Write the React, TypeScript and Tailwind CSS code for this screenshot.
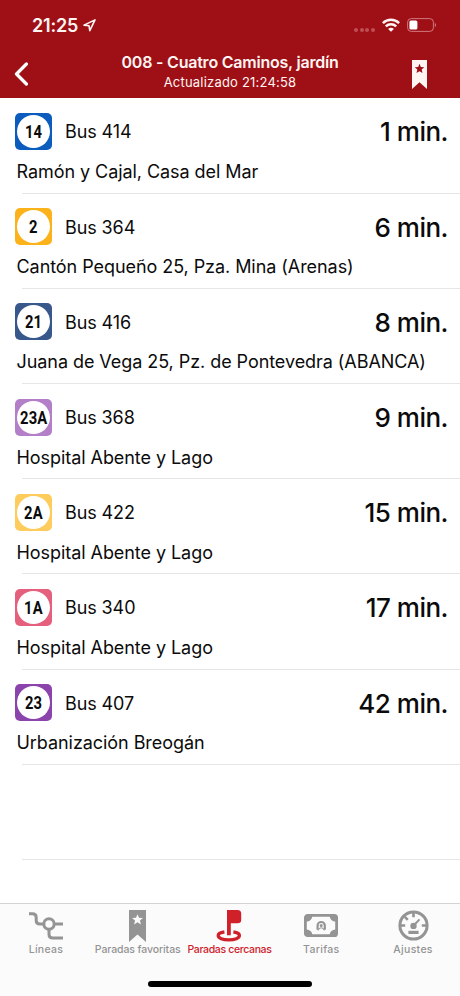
// Bus stop arrivals screen
import React from 'react'

interface Arrival {
  line: string
  bus: string
  destination: string
  minutes: number
  color: string
}

const arrivals: Arrival[] = [
  { line: '14', bus: '414', destination: 'Ramón y Cajal, Casa del Mar', minutes: 1, color: 'bg-[#0b5cbc]' },
  { line: '2', bus: '364', destination: 'Cantón Pequeño 25, Pza. Mina (Arenas)', minutes: 6, color: 'bg-[#fcb31b]' },
  { line: '21', bus: '416', destination: 'Juana de Vega 25, Pz. de Pontevedra (ABANCA)', minutes: 8, color: 'bg-[#38588c]' },
  { line: '23A', bus: '368', destination: 'Hospital Abente y Lago', minutes: 9, color: 'bg-[#b27fc8]' },
  { line: '2A', bus: '422', destination: 'Hospital Abente y Lago', minutes: 15, color: 'bg-[#fdcc5c]' },
  { line: '1A', bus: '340', destination: 'Hospital Abente y Lago', minutes: 17, color: 'bg-[#e5607c]' },
  { line: '23', bus: '407', destination: 'Urbanización Breogán', minutes: 42, color: 'bg-[#8a44ab]' },
]

function LocationArrow() {
  return (
    <svg width="13" height="13" viewBox="0 0 13 13" fill="none" stroke="currentColor" strokeWidth="1.6" strokeLinejoin="round">
      <path d="M12 .9 1 6.1l5 .6.8 5z" />
    </svg>
  )
}

function WifiIcon() {
  return (
    <svg width="18" height="14" viewBox="0 0 18 14" fill="none" stroke="currentColor" strokeWidth="2.5">
      <path d="M.9 5.1a11.6 11.6 0 0 1 16.2 0" />
      <path d="M3.8 8.4a7.5 7.5 0 0 1 10.4 0" />
      <path d="M9 13.7 6.1 10.9a4 4 0 0 1 5.8 0z" fill="currentColor" stroke="none" />
    </svg>
  )
}

function BatteryIcon() {
  return (
    <svg width="30" height="14" viewBox="0 0 30 14" fill="none">
      <rect x=".6" y=".6" width="25.8" height="12.8" rx="3.6" stroke="#d0787e" strokeWidth="1" />
      <rect x="2.4" y="2.4" width="8" height="9.2" rx="1.6" fill="#fff" />
      <path d="M27.8 4.8c1.7.7 1.7 3.7 0 4.4z" fill="#d0787e" />
    </svg>
  )
}

function LinesIcon() {
  return (
    <svg width="34" height="28" viewBox="0 0 34 28" fill="none" stroke="currentColor" strokeWidth="3">
      <path d="M0 1.8h3.4q3.8 0 3.8 3.6v3q0 3.6 3.8 3.6H15" />
      <circle cx="20" cy="12" r="5.2" />
      <path d="M25 12h9M20 17v5.2q0 3.8 3.8 3.8H34" />
    </svg>
  )
}

function BookmarkIcon({ width, height, star }: { width: number; height: number; star: string }) {
  return (
    <svg width={width} height={height} viewBox="0 0 16 30" preserveAspectRatio="none">
      <path d="M0 0h16v30L8 23 0 30z" fill="currentColor" />
      <path d="m8 4 1.4 3.3 3.7.3-2.8 2.3.9 3.6L8 11.6l-3.2 1.9.9-3.6-2.8-2.3 3.7-.3z" className={star} />
    </svg>
  )
}

function StopIcon() {
  return (
    <svg width="26" height="32" viewBox="0 0 26 32">
      <path d="M11 0h10.6q3.6 0 3.6 3.6V10q0 3.3-3.6 3.3h-6.8v11.9H11z" fill="currentColor" />
      <path d="M8.4 22c-4.6.5-6.2 2-6.2 3.6 0 2.5 4.4 4.3 10.6 4.3s10.6-1.8 10.6-4.3c0-1.6-1.8-3.1-6-3.6" fill="none" stroke="currentColor" strokeWidth="3.3" />
    </svg>
  )
}

function FaresIcon() {
  return (
    <svg width="34" height="23" viewBox="0 0 34 23" fill="none" stroke="currentColor">
      <rect x="1.4" y="1.4" width="31.2" height="20.2" rx="2.2" strokeWidth="2.8" />
      <path d="M2 2h6.4Q8 7 2 7.8zM32 2h-6.4q.4 5 6.4 5.8zM2 21h6.4Q8 16 2 15.2zM32 21h-6.4q.4-5 6.4-5.8z" fill="currentColor" stroke="none" />
      <path d="M13.6 15.8v-4.2a3.6 3.6 0 0 1 7.2 0v4.2" strokeWidth="2.2" />
      <circle cx="17.2" cy="11.6" r="1.5" fill="currentColor" stroke="none" />
      <path d="M14 16.4c1.6-3.6 4.8-3.6 6.4 0" strokeWidth="1.1" />
    </svg>
  )
}

function GaugeIcon() {
  return (
    <svg width="31" height="31" viewBox="0 0 31 31" fill="none" stroke="currentColor">
      <circle cx="15.5" cy="15.5" r="13.6" strokeWidth="3" />
      <path d="M15.5 3v4.2M3 15.5h4.2M23.8 15.5H28M6.8 6.8l3 3" strokeWidth="2.6" />
      <path d="m15.5 15.7 6-6.3" strokeWidth="2" />
      <circle cx="15.5" cy="15.9" r="3.2" fill="currentColor" stroke="none" />
      <path d="M10.4 22.4h10.2" strokeWidth="3.2" />
    </svg>
  )
}

function ArrivalRow({ arrival }: { arrival: Arrival }) {
  return (
    <li className="flex h-[95.2px] flex-col pt-[14.6px]">
      <div className="flex h-[37px] items-center pl-[15px] pr-[12px]">
        <div className={`flex size-[37px] items-center justify-center rounded-[5px] ${arrival.color}`}>
          <div className="flex size-[33px] items-center justify-center rounded-full bg-white">
            <span className="scale-x-[0.82] pt-px font-[Roboto,sans-serif] text-[18px] font-bold leading-none tracking-[0.2px]">
              {arrival.line}
            </span>
          </div>
        </div>
        <span className="ml-[13px] pt-px text-[18px] tracking-[-0.1px]">Bus {arrival.bus}</span>
        <span className="ml-auto pt-px text-[26px] font-medium tracking-[-0.5px]">{arrival.minutes} min.</span>
      </div>
      <p className="mt-[8px] whitespace-nowrap pl-[16.5px] text-[18px] leading-[28px] tracking-[-0.06px]">{arrival.destination}</p>
      <div className="ml-[22px] mt-auto h-px bg-[#e6e6e7]" />
    </li>
  )
}

const tabs = [
  { label: 'Líneas', icon: <LinesIcon />, spacing: 'tracking-[0.25px]' },
  { label: 'Paradas favoritas', icon: <BookmarkIcon width={17} height={32} star="fill-[#fbfbfb]" />, spacing: 'tracking-[-0.1px]' },
  { label: 'Paradas cercanas', icon: <StopIcon />, active: true, spacing: 'tracking-[-0.35px]' },
  { label: 'Tarifas', icon: <FaresIcon />, spacing: 'tracking-[0.3px]' },
  { label: 'Ajustes', icon: <GaugeIcon />, spacing: 'tracking-[0.3px]' },
]

export default function App() {
  return (
    <div className="flex h-[996px] w-[460px] flex-col overflow-hidden bg-white font-[Inter,sans-serif] text-[#0b0b0b]">
      {/* Header */}
      <header className="h-[98px] bg-[#9e1016] text-[#fff5f3]">
        <div className="flex h-[50px] items-center pl-8 pr-[23px]">
          <span className="pt-px text-[18px] font-semibold leading-none tracking-[-0.2px]">21:25</span>
          <span className="ml-[5px]"><LocationArrow /></span>
          <div className="ml-auto mt-[9px] flex gap-[1.7px]">
            {[0, 1, 2, 3].map((dot) => (
              <span key={dot} className="size-1 rounded-full bg-[#bf4f54]" />
            ))}
          </div>
          <span className="ml-[7px]"><WifiIcon /></span>
          <span className="ml-[7px]"><BatteryIcon /></span>
        </div>
        <div className="flex h-12 items-center pl-[14px] pr-[33px]">
          <svg width="15" height="24" viewBox="0 0 15 24" fill="none" stroke="white" strokeWidth="3.2" strokeLinecap="round" strokeLinejoin="round">
            <path d="M12.4 2 2.5 12l9.9 10" />
          </svg>
          <div className="flex flex-1 flex-col items-center pb-[4px] pl-[19px]">
            <h1 className="text-[16px] font-semibold leading-[20px] tracking-[-0.22px]">008 - Cuatro Caminos, jardín</h1>
            <p className="text-[13px] leading-[20px] tracking-[0.2px]">Actualizado 21:24:58</p>
          </div>
          <BookmarkIcon width={15} height={29} star="fill-[#9e1016]" />
        </div>
      </header>

      {/* Arrivals */}
      <ul className="flex-1 pt-[0.4px]">
        {arrivals.map((arrival) => (
          <ArrivalRow key={arrival.bus} arrival={arrival} />
        ))}
        <li className="flex h-[95.2px] items-end pl-[22px]">
          <div className="h-px w-full bg-[#e6e6e7]" />
        </li>
      </ul>

      {/* Tab bar */}
      <nav className="flex h-[93px] flex-col border-t border-[#d3d3d3] bg-[#fbfbfb]">
        <div className="grid grid-cols-5 pr-px">
          {tabs.map((tab) => (
            <div key={tab.label} className={`flex flex-col items-center ${tab.active ? 'text-[#d0212b]' : 'text-[#949494]'}`}>
              <div className="mt-[5px] flex h-[33px] items-center">{tab.icon}</div>
              <span className={`whitespace-nowrap text-[10.5px] font-medium leading-[15px] ${tab.spacing}`}>{tab.label}</span>
            </div>
          ))}
        </div>
        <div className="mx-auto mb-[9px] mt-auto h-[6px] w-[164px] rounded-full bg-black" />
      </nav>
    </div>
  )
}
